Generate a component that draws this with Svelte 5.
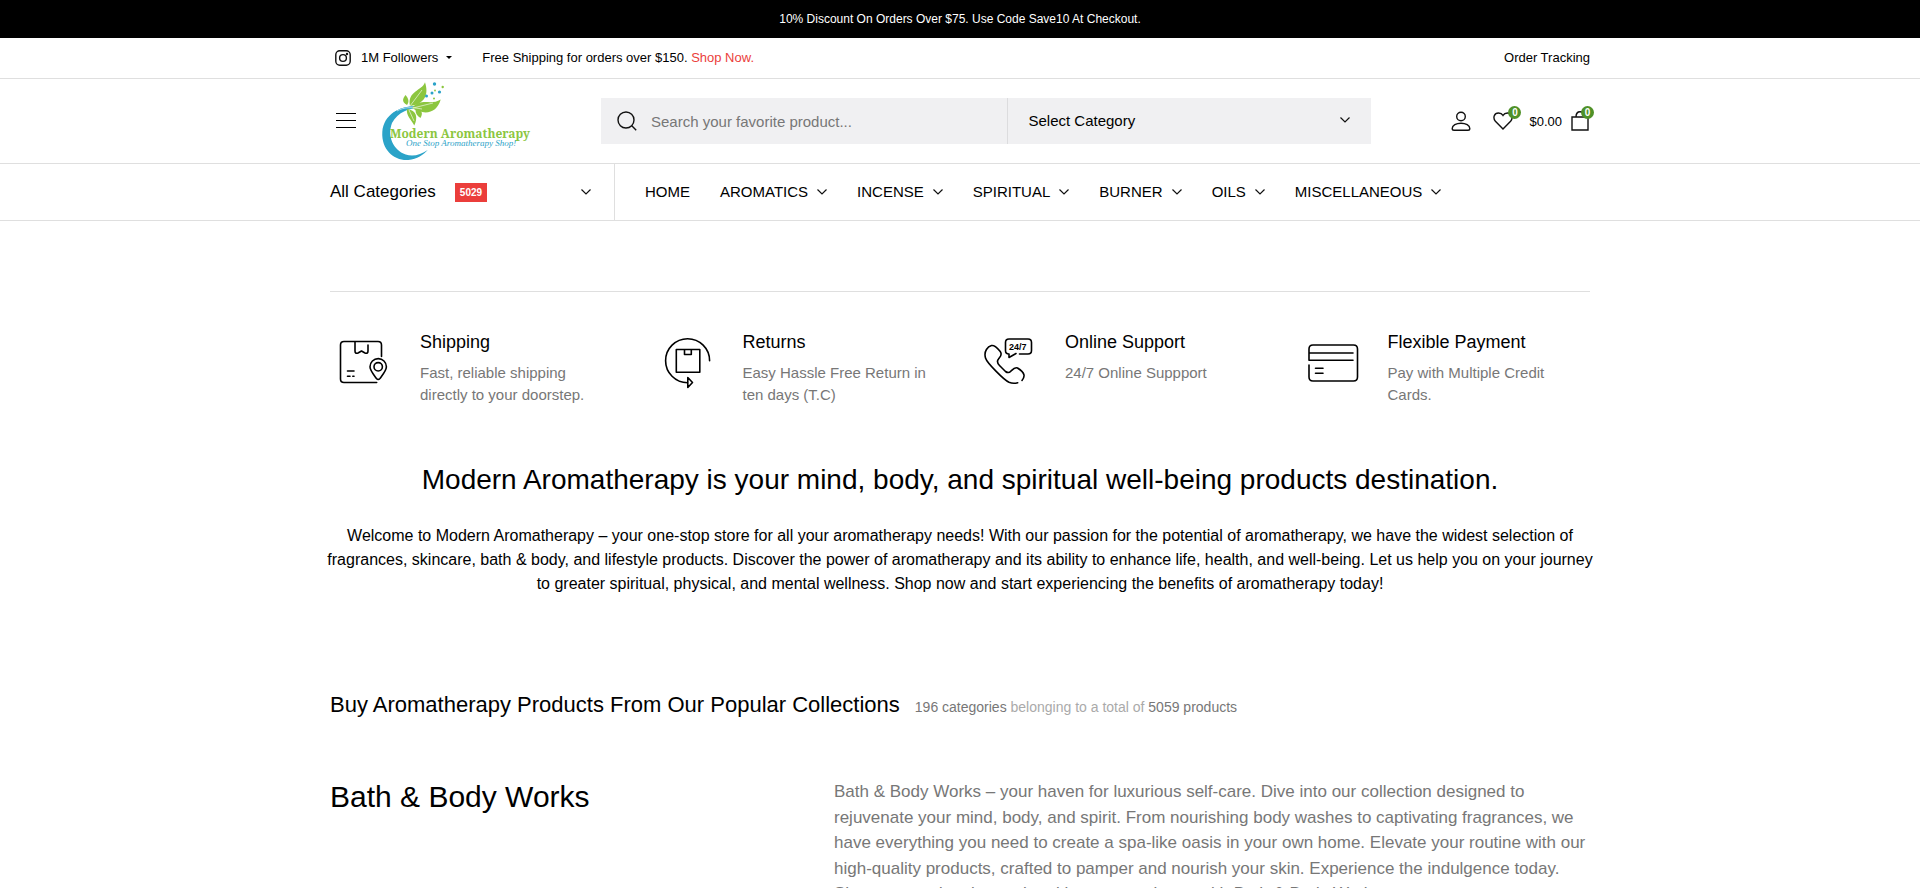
<script>
  const nav = ['HOME', 'AROMATICS', 'INCENSE', 'SPIRITUAL', 'BURNER', 'OILS', 'MISCELLANEOUS'];
  const services = [
    { icon: 'box', title: 'Shipping', text: 'Fast, reliable shipping directly to your doorstep.' },
    { icon: 'return', title: 'Returns', text: 'Easy Hassle Free Return in ten days (T.C)' },
    { icon: 'phone', title: 'Online Support', text: '24/7 Online Suppport' },
    { icon: 'card', title: 'Flexible Payment', text: 'Pay with Multiple Credit Cards.' }
  ];
</script>

{#snippet chevron()}
  <svg class="chevron" viewBox="0 0 10 10" width="10" height="10" aria-hidden="true"><path d="M0.500 2.500 5 7l4.500-4.500" /></svg>
{/snippet}

<div class="page">
  <div class="notice">10% Discount On Orders Over $75. Use Code Save10 At Checkout.</div>

  <div class="topbar">
    <div class="container row">
      <button class="followers">
        <svg viewBox="0 0 16 16" width="16" height="16" aria-hidden="true">
          <rect x="0.8" y="0.8" width="14.4" height="14.4" rx="4" /><circle cx="8" cy="8" r="3.4" /><circle cx="12" cy="4" r="0.5" />
        </svg>
        1M Followers
        <span class="caret"></span>
      </button>
      <p class="promo">Free Shipping for orders over $150. <a href="#shop">Shop Now.</a></p>
      <a class="tracking" href="#tracking">Order Tracking</a>
    </div>
  </div>

  <header class="header">
    <div class="container row">
      <button class="burger" aria-label="Menu"><span></span><span></span><span></span></button>
      <a class="logo" href="#home" aria-label="Modern Aromatherapy">
        <svg viewBox="0 0 150 84" width="150" height="84">
          <path fill="#2ba3c8" d="M42 28C25 25 3 32 1.300 53c-1 18 12 29 26 28 9-1 15-5 19.400-10-7 5-15 7-22 4.500C12 71 6 57 11 44c6-11 17-15 31-16z" />
          <path d="M12 35c8-7 18-8 27-5" fill="none" stroke="#2ba3c8" stroke-width="1.2" />
          <g fill="#8cc63f">
            <path d="M29 27C26 12 41 12 44 3.300c4 12 0 22-15 23.700z" />
            <path d="M31 29c9-11 19-2 28.700-8.500C56 34 44 37 31 29z" />
            <path d="M26 26c-6-3-4-7-1.500-10 3 3 4 7 1.500 10z" />
            <path d="M26 30c-1 7 4 10 7.300 16.500C37 39 36 31 26 30z" />
            <path d="M34.500 31c0 4 2 6 5 8 3-5 1-9-5-8z" />
            <circle cx="54" cy="11.500" r="0.900" /><circle cx="61.700" cy="8" r="1.200" /><circle cx="53" cy="19.500" r="1" />
          </g>
          <path d="M16 32c7-4 14-4 25-2M29 27 41 11M32 29l20-5M28 31l5 11" fill="none" stroke="#fff" stroke-width="0.600" />
          <g fill="#2ba3c8"><circle cx="53.500" cy="5" r="1.700" /><circle cx="58.500" cy="13" r="1.600" /><circle cx="51" cy="14" r="1.500" /><circle cx="45.500" cy="17" r="1.500" /></g>
          <text class="brand" x="9" y="59">Modern Aromatherapy</text>
          <text class="tagline" x="25" y="67">One Stop Aromatherapy Shop!</text>
        </svg>
      </a>
      <form class="search" role="search">
        <label class="field">
          <svg viewBox="0 0 20 20" width="20" height="20" aria-hidden="true"><circle cx="9" cy="9" r="8" /><path d="m14.800 14.800 4.400 4.400" /></svg>
          <input type="text" placeholder="Search your favorite product..." aria-label="Search products" />
        </label>
        <label class="category">
          <select aria-label="Category"><option>Select Category</option></select>
          {@render chevron()}
        </label>
      </form>
      <div class="actions">
        <a href="#account" aria-label="Account">
          <svg viewBox="0 0 20 20" width="20" height="20"><circle cx="10" cy="5.500" r="4.300" /><path d="M3 19.200h14c1.300 0 1.800-.8 1.800-1.800 0-3-4-5.200-8.800-5.200s-8.800 2.200-8.800 5.200c0 1 .5 1.800 1.800 1.800z" /></svg>
        </a>
        <a class="wish" href="#wishlist" aria-label="Wishlist">
          <svg viewBox="0 0 20 20" width="20" height="20"><path d="M10 18 2.400 10.200C-.5 6.800 1.300 2 5.500 2 7.800 2 9.200 3 10 4.300 10.800 3 12.200 2 14.500 2c4.200 0 6 4.800 3.100 8.200z" /></svg>
          <span class="count">0</span>
        </a>
        <a class="cart" href="#cart" aria-label="Cart">
          $0.00
          <span class="bag">
            <svg viewBox="0 0 20 20" width="20" height="20"><path d="M2 6h16v13H2zM6 6c0-7 8-7 8 0" /></svg>
            <span class="count">0</span>
          </span>
        </a>
      </div>
    </div>
  </header>

  <nav class="nav">
    <div class="container row">
      <button class="all">All Categories <span class="tag">5029</span>{@render chevron()}</button>
      <ul>
        {#each nav as item, i}
          <li><a href="#{item.toLowerCase()}">{item}{#if i}{@render chevron()}{/if}</a></li>
        {/each}
      </ul>
    </div>
  </nav>

  <main class="container">
    <section class="services">
      {#each services as s}
        <article>
          <svg class="service-icon" viewBox="0 0 60 60" width="60" height="60" aria-hidden="true">
            {#if s.icon === 'box'}
              <path d="M46.700 52.500H14q-3.500 0-3.500-3.500V15q0-3.500 3.500-3.500h34q3.500 0 3.500 3.500v11.500M25 11.500V21q0 3 3 2l3.500-2 3.500 2q3 1 3-2v-6M17.500 41h6.500M17.500 46.200H20M22.800 46.200h1.200" />
              <path d="M46.500 48.500c-3-4-6.500-8-6.500-11.700a8.200 8.200 0 0 1 16.400 0c0 3.700-3.500 7.700-6.500 11.700q-1.700 2-3.400 0z" /><circle cx="48.200" cy="36.800" r="4.200" />
            {:else if s.icon === 'return'}
              <path d="M56.600 30.700A22 22 0 1 0 34.600 52.700M23.300 19.500h23.500v22.800H23.300zM31.500 19.500v5h6.800v-5M34.800 47.500v10l4.700-5z" />
            {:else if s.icon === 'phone'}
              <path d="M42.700 52.700C40 53.500 37 53.500 34 52.300 29 50 12 33 10.500 28 8.500 21 13 16.500 16.500 15.500c4-.7 6.500 3.500 9 6.500 2 3-.5 5-2 7-2 2.500-1 4.500 1 6.500l6 6c2 1.500 4 1.200 5.500-.5 2-2 4-4.300 6.500-3 2.500 1.500 6 4.500 6.500 7 .3 2-.8 4-2 5.500" />
              <path d="M44.500 24H53q3.500 0 3.500-3.500v-8q0-3.500-3.500-3.500H34q-3.500 0-3.500 3.500v8q0 3.500 3.500 3.500v3.500l7-4" />
              <text x="34" y="20">24/7</text>
            {:else}
              <path d="M11 30.300V19q0-4 4-4h40.500q4 0 4 4v28q0 4-4 4H15q-4 0-4-4V35M11 23h44M11 30.300h44M17.500 38.300h7.500M17.500 43.300h7.500" />
            {/if}
          </svg>
          <div><h3>{s.title}</h3><p>{s.text}</p></div>
        </article>
      {/each}
    </section>

    <section class="intro">
      <h1>Modern Aromatherapy is your mind, body, and spiritual well-being products destination.</h1>
      <p>Welcome to Modern Aromatherapy – your one-stop store for all your aromatherapy needs! With our passion for the potential of aromatherapy, we have the widest selection of fragrances, skincare, bath &amp; body, and lifestyle products. Discover the power of aromatherapy and its ability to enhance life, health, and well-being. Let us help you on your journey to greater spiritual, physical, and mental wellness. Shop now and start experiencing the benefits of aromatherapy today!</p>
    </section>

    <div class="collections">
      <h2>Buy Aromatherapy Products From Our Popular Collections</h2>
      <p><strong>196 categories</strong> belonging to a total of <strong>5059 products</strong></p>
    </div>

    <section class="feature">
      <h2>Bath &amp; Body Works</h2>
      <p>Bath &amp; Body Works – your haven for luxurious self-care. Dive into our collection designed to rejuvenate your mind, body, and spirit. From nourishing body washes to captivating fragrances, we have everything you need to create a spa-like oasis in your own home. Elevate your routine with our high-quality products, crafted to pamper and nourish your skin. Experience the indulgence today. Shop now and embrace the ultimate experience with Bath &amp; Body Works.</p>
    </section>
  </main>
</div>

<style>
  :global(body) { background: #fff; overflow: hidden; }
  .page { height: 100vh; overflow: hidden; font-family: 'Liberation Sans', Arial, sans-serif; color: #000; }
  .page * { box-sizing: border-box; }
  h1, h2, h3, p, ul { margin: 0; padding: 0; font-weight: 400; }
  a { color: inherit; text-decoration: none; }
  button { border: 0; padding: 0; background: none; color: inherit; font: inherit; }
  svg { display: block; flex: none; fill: none; stroke: #111; stroke-width: 1.4; }
  .container { max-width: 1260px; margin: 0 auto; }
  .row { display: flex; align-items: center; }
  .notice { background: #000; color: #fff; font-size: 12px; line-height: 38px; text-align: center; }
  .topbar { border-bottom: 1px solid #dfdfdf; font-size: 13px; }
  .topbar .row { height: 40px; padding-bottom: 1px; }
  .followers { display: flex; align-items: center; gap: 10px; margin-left: 5px; }
  .caret { border: 3px solid transparent; border-top-color: #000; border-bottom: 0; margin-left: -2px; }
  .promo { margin-left: 30px; }
  .promo a { color: #eb3e3b; }
  .tracking { margin-left: auto; }
  .header { border-bottom: 1px solid #dfdfdf; }
  .header .row { height: 84px; }
  .burger { display: flex; flex-direction: column; gap: 6px; width: 20px; margin: 0 25px 2px 6px; }
  .burger span { height: 1px; background: #000; }
  .logo svg { stroke: none; overflow: visible; }
  .brand { font: 700 12px 'Noto Serif', 'DejaVu Serif', serif; fill: #8cc63f; }
  .tagline { font: italic 9px 'Liberation Serif', serif; fill: #2ba3c8; }
  .search { display: flex; flex: 1; height: 46px; margin: 0 80px 0 70px; background: #f0f0f2; font-size: 15px; }
  .field { display: flex; align-items: center; gap: 14px; flex: 1; padding-left: 16px; border-right: 1px solid #dcdcde; }
  .field input { flex: 1; min-width: 0; border: 0; padding: 0; background: none; font: inherit; outline: 0; }
  .field input::placeholder { color: #777; }
  .category { display: flex; align-items: center; width: 363px; padding: 0 21px 2px 20px; }
  .category select { flex: 1; appearance: none; border: 0; padding: 0; background: none; font: inherit; color: #000; }
  .actions { display: flex; align-items: center; font-size: 13px; }
  .actions a, .bag { position: relative; }
  .wish { margin: 0 16px 0 22px; }
  .cart { display: flex; align-items: center; gap: 8px; }
  .count { position: absolute; top: -5px; right: -4px; width: 13px; height: 13px; border-radius: 50%; background: #4f9128; color: #fff; font-size: 10px; font-weight: 700; line-height: 13px; text-align: center; }
  .wish .count { right: -8px; }
  .nav { border-bottom: 1px solid #dfdfdf; font-size: 15px; }
  .nav .row { height: 56px; }
  .all { display: flex; align-items: center; width: 285px; height: 56px; padding-right: 23px; border-right: 1px solid #dfdfdf; font-size: 17px; }
  .all .chevron { margin-left: auto; }
  .tag { margin-left: 19px; padding: 0 5px; background: #eb3e3b; color: #fff; font-size: 10px; font-weight: 700; line-height: 19px; }
  ul { display: flex; gap: 30px; padding: 0 0 1px 30px; list-style: none; }
  li a { display: flex; align-items: center; gap: 9px; }
  .chevron { stroke-width: 1.2; }
  .services { display: grid; grid-template-columns: repeat(4, 1fr); gap: 30px; margin-top: 70px; padding-top: 38px; border-top: 1px solid #dfdfdf; }
  .services article { display: flex; gap: 30px; }
  .services h3 { font-size: 18px; line-height: 24px; margin-bottom: 8px; }
  .services p { padding-right: 15px; font-size: 15px; line-height: 22px; color: #777; }
  .service-icon { overflow: visible; stroke: #000; stroke-width: 1.6; stroke-linecap: round; stroke-linejoin: round; }
  .service-icon text { fill: #000; stroke: none; font-size: 9px; font-weight: 700; }
  .intro { margin-top: 54px; text-align: center; }
  .intro h1 { font-size: 28px; line-height: 40px; margin-bottom: 24px; }
  .intro p { margin: 0 -8px; font-size: 16px; line-height: 24px; }
  .collections { display: flex; align-items: baseline; gap: 15px; margin-top: 94px; }
  .collections h2 { font-size: 22px; line-height: 30px; }
  .collections p { font-size: 14px; color: #aaa; }
  .collections strong { font-weight: 400; color: #777; }
  .feature { display: grid; grid-template-columns: 2fr 3fr; margin-top: 59px; }
  .feature h2 { font-size: 30px; line-height: 36px; }
  .feature p { font-size: 17px; line-height: 1.5; color: #777; }
</style>
